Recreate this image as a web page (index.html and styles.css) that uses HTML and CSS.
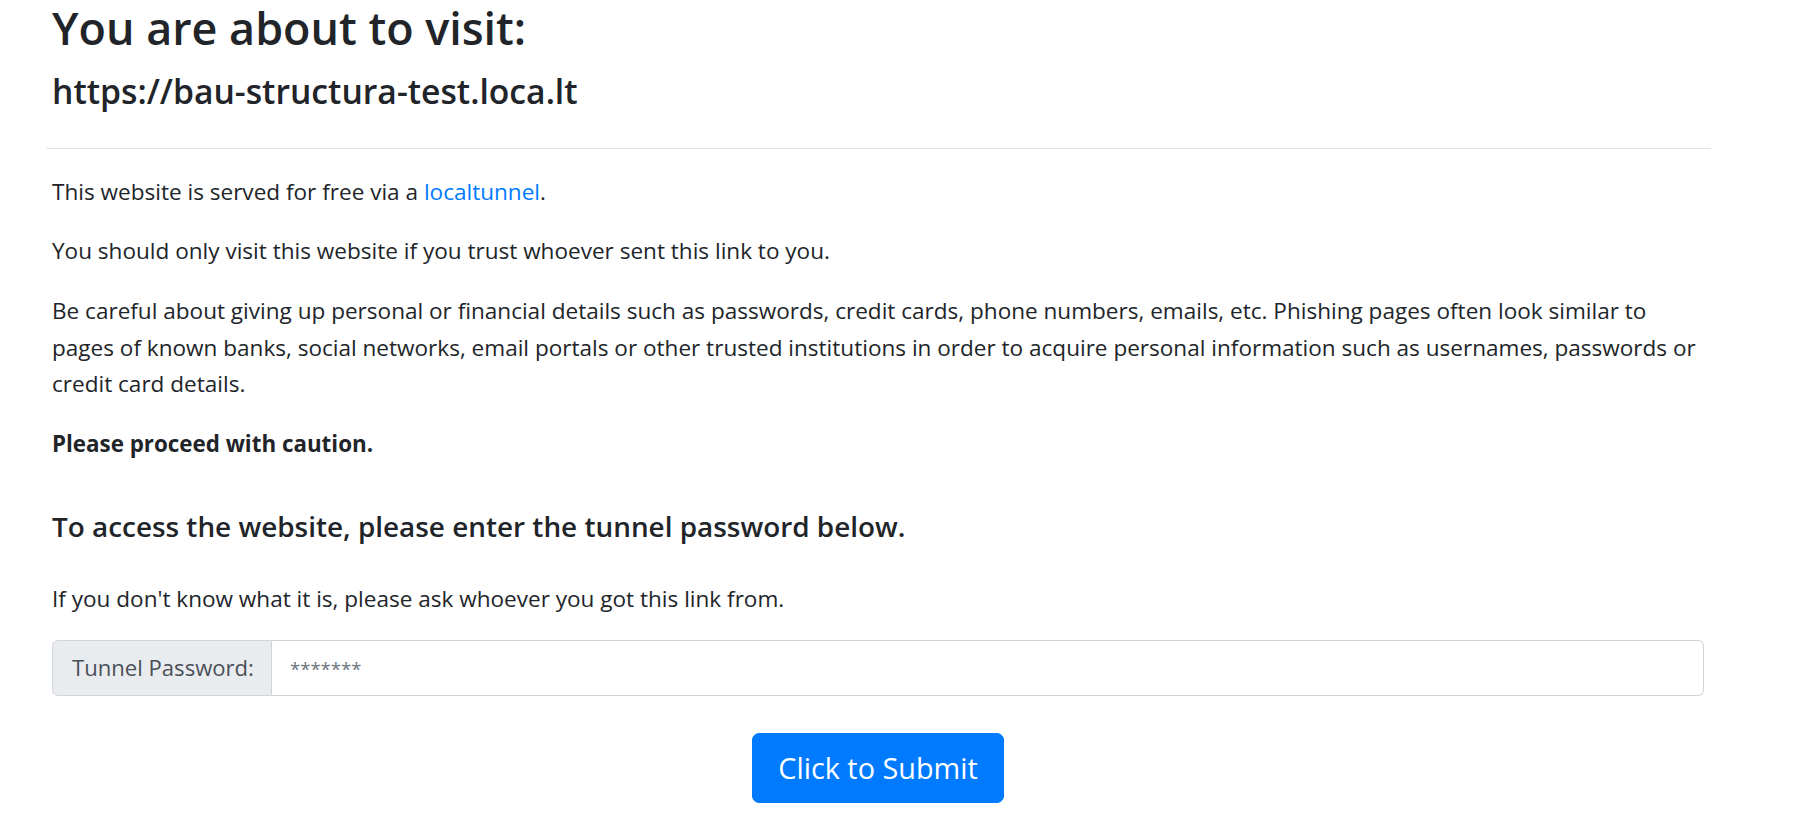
FILE: index.html
```html
<!DOCTYPE html>
<html lang="en">
<head>
<meta charset="utf-8">
<title>Friendly Reminder</title>
<link rel="stylesheet" href="styles.css">
</head>
<body>
<div class="container">
  <h1 class="title">You are about to visit:</h1>
  <h2 class="url">https://bau-structura-test.loca.lt</h2>
  <hr class="divider">
  <p class="text">This website is served for free via a <a class="link" href="#">localtunnel</a>.</p>
  <p class="text">You should only visit this website if you trust whoever sent this link to you.</p>
  <p class="text">Be careful about giving up personal or financial details such as passwords, credit cards, phone numbers, emails, etc. Phishing pages often look similar to pages of known banks, social networks, email portals or other trusted institutions in order to acquire personal information such as usernames, passwords or credit card details.</p>
  <p class="text strong">Please proceed with caution.</p>
  <h5 class="subtitle">To access the website, please enter the tunnel password below.</h5>
  <p class="text hint">If you don't know what it is, please ask whoever you got this link from.</p>
  <form class="form">
    <div class="input-group">
      <span class="input-label">Tunnel Password:</span>
      <input class="input" type="text" placeholder="*******">
    </div>
    <div class="actions">
      <button class="btn" type="button">Click to Submit</button>
    </div>
  </form>
</div>
</body>
</html>
```
FILE: styles.css
```css
html, body {
  margin: 0;
  padding: 0;
  background: #fff;
}
body {
  font-family: "Open Sans", "Noto Sans", sans-serif;
  color: #212529;
  font-size: 22.55px;
  line-height: 36.7px;
}
.container {
  width: 1652px;
  padding: 1px 93px 0 52px;
}
.title {
  margin: 0 0 16.3px;
  font-size: 44.9px;
  font-weight: 600;
  line-height: 1.2;
}
.url {
  margin: 0;
  font-size: 33.7px;
  font-weight: 600;
  line-height: 1.2;
}
.divider {
  margin: 36px -7px 25px -6px;
  border: 0;
  border-top: 1px solid #e3e3e3;
  height: 0;
}
.text {
  margin: 0 0 23px;
}
.strong {
  font-weight: 700;
  font-size: 22.36px;
}
.link {
  color: #007bff;
  text-decoration: none;
}
.subtitle {
  margin: 47.5px 0 0;
  font-size: 27.9px;
  font-weight: 600;
  line-height: 1.2;
}
.hint {
  margin-top: 37px;
  margin-bottom: 22px;
}
.form {
  margin: 0;
}
.input-group {
  display: flex;
  height: 56px;
}
.input-label {
  display: flex;
  align-items: center;
  box-sizing: border-box;
  width: 220px;
  padding: 0 18px 0 19px;
  background: #e9ecef;
  border: 1px solid #ced4da;
  border-radius: 6px 0 0 6px;
  color: #495057;
  font-size: 22.1px;
  white-space: nowrap;
}
.input {
  flex: 1;
  box-sizing: border-box;
  height: 56px;
  margin: 0;
  padding: 0 18px;
  border: 1px solid #ced4da;
  border-left: 0;
  border-radius: 0 6px 6px 0;
  font-family: "Open Sans", "Noto Sans", sans-serif;
  font-size: 22.55px;
  color: #495057;
  outline: none;
}
.input::placeholder {
  color: #6c757d;
  opacity: 1;
  font-size: 18.5px;
}
.actions {
  display: flex;
  justify-content: center;
  margin-top: 37.5px;
}
.btn {
  height: 70px;
  padding: 0 25.5px;
  border: 1px solid #007bff;
  border-radius: 7px;
  background: #007bff;
  color: #fff;
  font-family: "Open Sans", "Noto Sans", sans-serif;
  font-size: 28.8px;
  line-height: 1.5;
  cursor: pointer;
}
```
